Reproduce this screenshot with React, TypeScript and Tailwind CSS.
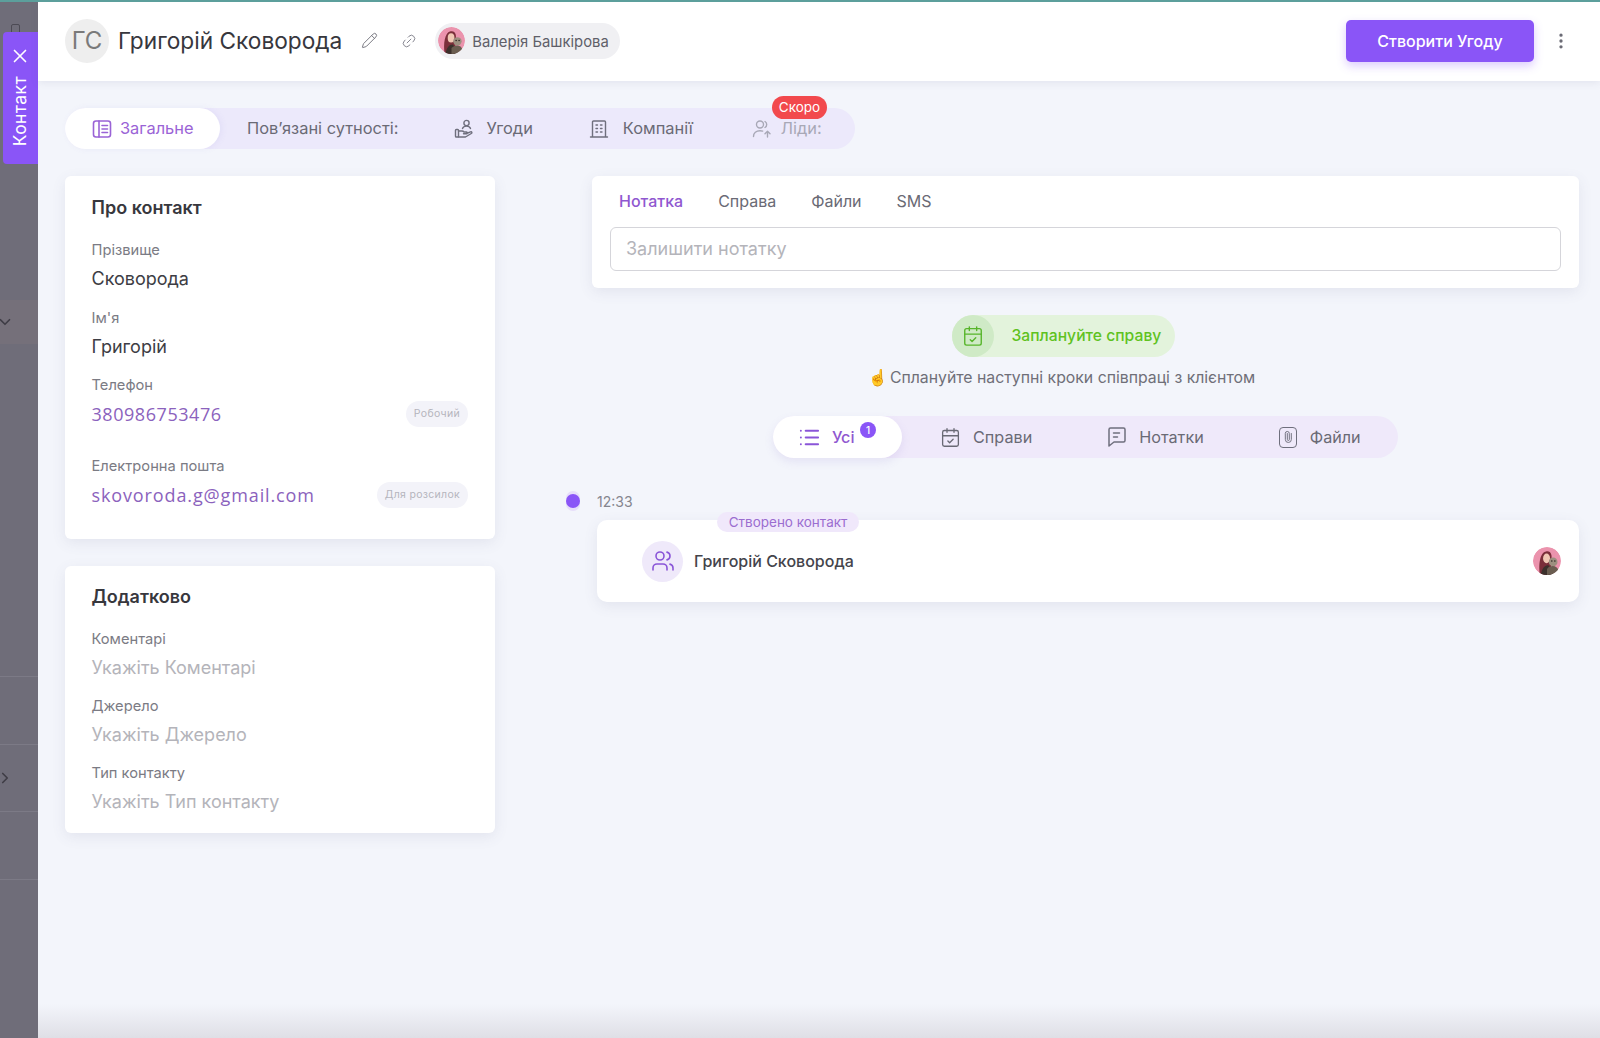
import React from "react";
import { X, Pencil, Link2, MoreVertical, List, CalendarCheck, Paperclip, Users, ChevronRight, ChevronDown } from "lucide-react";

const ui = { fontFamily: "Inter, 'Liberation Sans', sans-serif" };

function Avatar({ size }: { size: number }) {
  return (
    <svg width={size} height={size} viewBox="0 0 32 32" className="shrink-0 rounded-full">
      <circle cx="16" cy="16" r="16" fill="#eb93ad" />
      <path d="M8 32 C6 20 8 6 15 5 C21 4 22 10 21 15 L20 32 Z" fill="#7a2f3a" />
      <ellipse cx="15.5" cy="13" rx="4" ry="5.5" fill="#f0c8b4" />
      <path d="M9 32 C10 24 14 20 18 21 L24 32 Z" fill="#3b312c" />
      <circle cx="23" cy="17" r="5" fill="#9c8f7f" />
      <path d="M16 25 C20 20 28 21 29 27 L24 32 L16 32 Z" fill="#6a5d50" />
      <circle cx="21.5" cy="16" r="0.9" fill="#2a2320" />
      <circle cx="25" cy="16" r="0.9" fill="#2a2320" />
    </svg>
  );
}

function GeneralIcon() {
  return (
    <svg width="20" height="20" viewBox="0 0 20 20" fill="none" stroke="#9a63d6" strokeWidth="1.6" strokeLinecap="round" strokeLinejoin="round">
      <rect x="1.5" y="2" width="17" height="16" rx="2.5" />
      <path d="M7 2v16M10 6.5h5.5M10 10h5.5M10 13.5h5.5" />
    </svg>
  );
}

function DealsIcon() {
  return (
    <svg width="20" height="20" viewBox="0 0 20 20" fill="none" stroke="#6f6f7d" strokeWidth="1.4" strokeLinecap="round" strokeLinejoin="round">
      <circle cx="12.5" cy="4" r="2.6" />
      <path d="M8.5 9.5c.6-1.6 2.2-2.4 4-2.4s3.4.8 4 2.4" />
      <rect x="1.5" y="10.5" width="3" height="7.5" rx="0.8" />
      <path d="M4.5 12h3.5c1 0 1.6.4 2 1h2.5c1 0 1 1.8 0 1.8H9.500M12.500 14.500l4-1.700c1.300-.5 2 1 .8 1.700L11.500 18H4.500" />
    </svg>
  );
}

function CompanyIcon() {
  return (
    <svg width="20" height="20" viewBox="0 0 20 20" fill="none" stroke="#6f6f7d" strokeWidth="1.4" strokeLinecap="round" strokeLinejoin="round">
      <path d="M3.500 18V3a1 1 0 0 1 1-1h11a1 1 0 0 1 1 1v15M1.500 18h17" />
      <path d="M7 6h1.500M11.500 6H13M7 9.500h1.500M11.500 9.500H13M7 13h1.500M11.500 13H13" />
    </svg>
  );
}

function LeadsIcon() {
  return (
    <svg width="20" height="20" viewBox="0 0 20 20" fill="none" stroke="#a8a8b6" strokeWidth="1.4" strokeLinecap="round" strokeLinejoin="round">
      <circle cx="8" cy="5.500" r="3.500" />
      <path d="M13 2.500a3.500 3.500 0 0 1 0 6M1.500 17.500c0-3.600 2.700-5.800 6.500-5.800 1 0 1.900.1 2.700.4M15.500 18v-5.500M13 14.800l2.500-2.500 2.500 2.500" />
    </svg>
  );
}

function NoteIcon() {
  return (
    <svg width="20" height="22" viewBox="0 0 20 22" fill="none" stroke="#6f6f7d" strokeWidth="1.5" strokeLinecap="round" strokeLinejoin="round">
      <path d="M3.500 2h13a1.500 1.500 0 0 1 1.500 1.500v11a1.500 1.500 0 0 1-1.500 1.500H7l-5 4V3.500A1.500 1.500 0 0 1 3.500 2Z" />
      <path d="M6.500 7h6M6.500 11h4" />
    </svg>
  );
}

function FileClipIcon() {
  return (
    <span className="relative flex h-[21px] w-[18px] items-center justify-center rounded-[4px] border-[1.5px] border-[#6f6f7d]">
      <Paperclip size={12} strokeWidth={1.8} color="#6f6f7d" className="-rotate-45" />
    </span>
  );
}

function Field({ label, children, className = "" }: { label: string; children: React.ReactNode; className?: string }) {
  return (
    <div className={className}>
      <div className="text-[14.700px] leading-5 text-[#7b7b84]">{label}</div>
      <div className="mt-[5px] text-[18px] leading-[28px] text-[#3d3d44]">{children}</div>
    </div>
  );
}

function LinkValue({ value, tag, wide }: { value: string; tag: string; wide?: boolean }) {
  return (
    <div className="flex items-center justify-between pr-[27px]">
      <span
        className={wide ? "text-[#8b62bd] tracking-[0.88px]" : "text-[#8b62bd] tracking-[0.55px]"}
        style={{ fontFamily: "'Open Sans', sans-serif" }}
      >
        {value}
      </span>
      <span className="flex h-[26px] items-center rounded-full bg-[#f3f3f9] px-[8px] text-[10.500px] tracking-[0.3px] text-[#b5b5bd]">{tag}</span>
    </div>
  );
}

function Card({ title, children, className = "" }: { title: string; children: React.ReactNode; className?: string }) {
  return (
    <section className={"rounded-[6px] bg-white pl-[26.500px] shadow-[0_4px_14px_rgba(90,90,130,0.1)] " + className}>
      <h2 className="text-[18px] leading-[28px] font-semibold text-[#37373d]">{title}</h2>
      {children}
    </section>
  );
}

export default function App() {
  return (
    <div className="relative flex h-[1038px] w-[1600px] overflow-hidden bg-[#f3f5fb]" style={ui}>
      {/* тло за панеллю */}
      <aside className="flex w-[38px] shrink-0 flex-col bg-[#6f6d79] text-[#3f3d46]">
        <div className="h-[300px] pt-[24px] pl-[11px]">
          <div className="h-[9px] w-[9px] rounded-t-[2px] border border-[#4c4a54]" />
        </div>
        <div className="flex h-[44px] items-center bg-[#75707a]">
          <ChevronDown size={18} strokeWidth={2.2} className="-ml-[4px]" />
        </div>
        <div className="h-[333px] border-b border-[#7c7a86]" />
        <div className="h-[68px] border-b border-[#7c7a86]" />
        <div className="flex h-[67px] items-center border-b border-[#7c7a86]">
          <ChevronRight size={18} strokeWidth={2.2} className="-ml-[4px]" />
        </div>
        <div className="h-[68px] border-b border-[#7c7a86]" />
      </aside>

      {/* вкладка панелі */}
      <div className="absolute top-[32px] left-[3px] flex h-[132px] w-[35px] flex-col items-center rounded-l-[4px] bg-[#8a55f7] pt-[13px] pr-[1px] text-white">
        <X size={22} strokeWidth={1.8} />
        <span className="mt-[9px] text-[17.500px] leading-5 tracking-[0.4px] [writing-mode:vertical-rl] rotate-180">Контакт</span>
      </div>

      <main className="relative flex min-w-0 flex-1 flex-col">
        <header className="flex h-[81px] shrink-0 items-center bg-white pr-[29px] pl-[27px] shadow-[0_2px_8px_rgba(90,90,130,0.1)]">
          <span className="flex h-[44px] w-[44px] items-center justify-center rounded-full bg-[#eeeeee] text-[24px] text-[#7a7a7a]">ГС</span>
          <h1 className="ml-[9px] text-[22.700px] leading-8 font-normal text-[#37373d]">Григорій Сковорода</h1>
          <Pencil size={17} strokeWidth={1.3} color="#6f6f79" className="ml-[19px]" />
          <Link2 size={16} strokeWidth={1.4} color="#85858f" className="ml-[23px] -rotate-45" />
          <div className="ml-[18px] flex h-[36px] items-center rounded-full bg-[#f0f0f3] pr-[11px] pl-[3px]">
            <Avatar size={27} />
            <span className="mt-[2px] ml-[7px] text-[14.800px] leading-5 text-[#5f5f69]">Валерія Башкірова</span>
          </div>
          <button className="ml-auto h-[42px] w-[188px] rounded-[5px] bg-[#8a55f7] text-[16px] font-medium text-white shadow-[0_4px_10px_rgba(138,85,247,0.3)]">
            Створити Угоду
          </button>
          <MoreVertical size={20} color="#6b6b75" className="ml-[17px]" />
        </header>

        <div className="flex-1 pt-[27px] pr-[21px] pl-[27px]">
          {/* основні вкладки */}
          <nav className="relative flex h-[41px] w-[790px] items-center rounded-full bg-[#ece9fb] text-[16.400px] text-[#6a6a75]">
            <div className="flex h-[41px] w-[155px] items-center gap-[8px] rounded-full bg-white pl-[27px] text-[#9a63d6] shadow-[2px_0_6px_rgba(120,100,200,0.08)]">
              <GeneralIcon />
              <span>Загальне</span>
            </div>
            <span className="ml-[27px]">Пов’язані сутності:</span>
            <span className="ml-[55px]"><DealsIcon /></span>
            <span className="ml-[13px]">Угоди</span>
            <span className="ml-[56px]"><CompanyIcon /></span>
            <span className="ml-[14px]">Компанії</span>
            <span className="ml-[59px]"><LeadsIcon /></span>
            <span className="ml-[9px] text-[#a8a8b6]">Ліди:</span>
            <span className="absolute top-[-12px] left-[707px] flex h-[23px] w-[55px] items-center justify-center rounded-full bg-[#f2494d] text-[13.500px] text-white">Скоро</span>
          </nav>

          <div className="mt-[27px] flex items-start">
            {/* ліва колонка */}
            <div className="flex w-[430px] shrink-0 flex-col gap-[27px]">
              <Card title="Про контакт" className="h-[363px] pt-[18px]">
                <div className="mt-[18px] flex flex-col gap-[14.500px]">
                  <Field label="Прізвище">Сковорода</Field>
                  <Field label="Ім'я">Григорій</Field>
                  <Field label="Телефон" className="mb-[13px]">
                    <LinkValue value="380986753476" tag="Робочий" />
                  </Field>
                  <Field label="Електронна пошта">
                    <LinkValue value="skovoroda.g@gmail.com" tag="Для розсилок" wide />
                  </Field>
                </div>
              </Card>
              <Card title="Додатково" className="h-[267px] pt-[17px]">
                <div className="mt-[18px] flex flex-col gap-[14px]">
                  <Field label="Коментарі"><span className="text-[#b4b4ba]">Укажіть Коментарі</span></Field>
                  <Field label="Джерело"><span className="text-[#b4b4ba]">Укажіть Джерело</span></Field>
                  <Field label="Тип контакту"><span className="text-[#b4b4ba]">Укажіть Тип контакту</span></Field>
                </div>
              </Card>
            </div>

            {/* права колонка */}
            <div className="ml-[97px] flex min-w-0 flex-1 flex-col">
              <section className="h-[112px] rounded-[6px] bg-white px-[18px] pt-[15px] shadow-[0_4px_14px_rgba(90,90,130,0.1)]">
                <div className="flex h-[20px] items-center pl-[9px] text-[16px] text-[#6a6a75]">
                  <span className="font-medium text-[#9058d0]">Нотатка</span>
                  <span className="ml-[35px]">Справа</span>
                  <span className="ml-[35px]">Файли</span>
                  <span className="ml-[35px]">SMS</span>
                </div>
                <div className="mt-[16px] flex h-[44px] items-center rounded-[6px] border border-[#d5d5da] pb-[2px] pl-[15px] text-[18px] text-[#b4b4ba]">
                  Залишити нотатку
                </div>
              </section>

              <div className="mt-[27px] flex justify-center pr-[45px]">
                <div className="flex h-[42px] w-[223px] items-center rounded-full bg-[#e3f3dc]">
                  <span className="flex h-[42px] w-[42px] items-center justify-center rounded-full bg-[#cfeac6]">
                    <CalendarCheck size={22} strokeWidth={1.5} color="#57b52a" />
                  </span>
                  <span className="ml-[18px] text-[15.700px] font-medium text-[#5fc21f]">Заплануйте справу</span>
                </div>
              </div>
              <p className="mt-[11px] pr-[48px] text-center text-[15.800px] leading-5 text-[#6f6f78]">
                <span className="mr-[2px] text-[#eeb04a]">☝</span>Сплануйте наступні кроки співпраці з клієнтом
              </p>

              {/* фільтр стрічки */}
              <div className="mt-[28px] ml-[181px] flex h-[42px] w-[625px] items-center rounded-full bg-[#efe9fa] text-[16.200px] text-[#6a6a75]">
                <div className="relative flex h-[42px] w-[129px] items-center rounded-full bg-white pl-[25px] font-medium text-[#9058d0] shadow-[0_4px_10px_rgba(120,100,200,0.12)]">
                  <List size={23} strokeWidth={2} color="#8a55d8" />
                  <span className="ml-[11px]">Усі</span>
                  <span className="absolute top-[6px] left-[87px] flex h-[16px] w-[16px] items-center justify-center rounded-full bg-[#8a55f7] text-[10px] text-white">1</span>
                </div>
                <CalendarCheck size={21} strokeWidth={1.5} className="ml-[38px]" />
                <span className="ml-[12px]">Справи</span>
                <span className="ml-[75px]"><NoteIcon /></span>
                <span className="ml-[12px]">Нотатки</span>
                <span className="ml-[75px]"><FileClipIcon /></span>
                <span className="ml-[13px]">Файли</span>
              </div>

              {/* стрічка подій */}
              <div className="mt-[33px] -ml-[26px] flex h-[20px] items-center">
                <span className="flex h-[20px] w-[14px] items-center justify-center rounded-full bg-[#e7defa]">
                  <span className="h-[14px] w-[14px] rounded-full bg-[#8a55f7]" />
                </span>
                <span className="ml-[17px] text-[14px] text-[#85858e]">12:33</span>
              </div>
              <div className="relative mt-[9px] ml-[5px] flex h-[82px] items-center rounded-[10px] bg-white pr-[18px] pl-[45px] shadow-[0_4px_14px_rgba(90,90,130,0.1)]">
                <span className="absolute top-[-8px] left-[120px] flex h-[20px] w-[142px] items-center justify-center rounded-full bg-[#f0e8fb] text-[13.500px] text-[#9b6dd0]">
                  Створено контакт
                </span>
                <span className="flex h-[41px] w-[41px] shrink-0 items-center justify-center rounded-full bg-[#efe9fa]">
                  <Users size={24} strokeWidth={1.6} color="#8a55d8" />
                </span>
                <span className="ml-[11px] text-[16px] font-medium text-[#44444b]">Григорій Сковорода</span>
                <span className="ml-auto"><Avatar size={28} /></span>
              </div>
            </div>
          </div>
        </div>

        {/* нижня тінь */}
        <div className="absolute right-0 bottom-0 left-0 h-[34px] bg-gradient-to-b from-transparent to-[#dfdfe6]" />
      </main>

      <div className="absolute top-0 right-0 left-0 h-[2px] bg-[#5c9f9c]" />
    </div>
  );
}
